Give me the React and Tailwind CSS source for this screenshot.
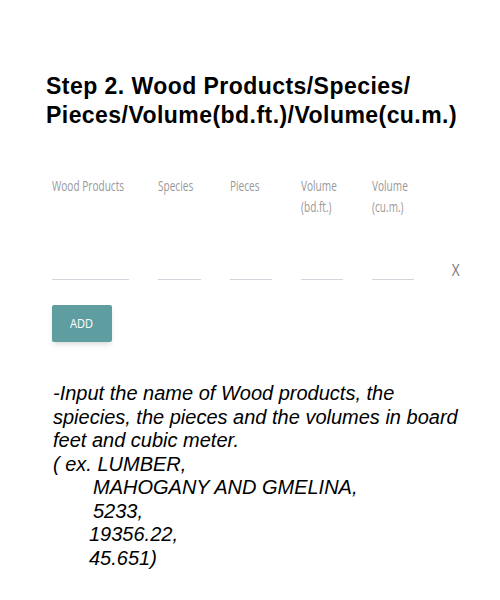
import React from 'react';

const columns = [
  { label: ['Wood Products'], width: 'w-[77px]' },
  { label: ['Species'], width: 'w-[43px]' },
  { label: ['Pieces'], width: 'w-[42px]' },
  { label: ['Volume', '(bd.ft.)'], width: 'w-[42px]' },
  { label: ['Volume', '(cu.m.)'], width: 'w-[42px]' },
];

const App = () => {
  return (
    <div className="w-[500px] h-[600px] bg-white overflow-hidden">
      <h1 className="pt-[72px] pl-[46px] text-[23px] leading-[29px] font-bold tracking-[0.45px] text-black font-['Liberation_Sans',Arial,sans-serif]">
        Step 2. Wood Products/Species/
        <br />
        Pieces/Volume(bd.ft.)/Volume(cu.m.)
      </h1>

      {/* entry row */}
      <div className="mt-[43px] pl-[52px] flex items-start font-['Open_Sans',sans-serif]">
        <div className="flex gap-[29px]">
          {columns.map((col, i) => (
            <div key={i} className={`${col.width} flex flex-col`}>
              <div className="h-[97px] pt-[2px] text-[14px] leading-[21px] text-[#999999] whitespace-nowrap scale-x-[0.72] origin-left">
                {col.label.map((l) => (
                  <div key={l}>{l}</div>
                ))}
              </div>
              <div className="h-[10px] border-b border-gray-300" />
            </div>
          ))}
        </div>
        <div className="ml-[37px] mt-[89px] text-[16px] leading-none text-[#777777]">
          <span className="inline-block scale-x-[0.85]">X</span>
        </div>
      </div>

      <button className="mt-[25px] ml-[52px] w-[60px] h-[37px] bg-[#5f9ea0] rounded-[2px] shadow-md text-white text-[13px] font-['Open_Sans',sans-serif]">
        <span className="inline-block scale-x-[0.85]">ADD</span>
      </button>

      <div className="mt-[40px] pl-[53px] text-[20px] leading-[23.5px] italic text-black font-['Liberation_Sans',Arial,sans-serif]">
        <div>-Input the name of Wood products, the</div>
        <div>spiecies, the pieces and the volumes in board</div>
        <div>feet and cubic meter.</div>
        <div>( ex. LUMBER,</div>
        <div className="pl-[40px]">MAHOGANY AND GMELINA,</div>
        <div className="pl-[40px]">5233,</div>
        <div className="pl-[36px]">19356.22,</div>
        <div className="pl-[36px]">45.651)</div>
      </div>
    </div>
  );
};

export default App;
